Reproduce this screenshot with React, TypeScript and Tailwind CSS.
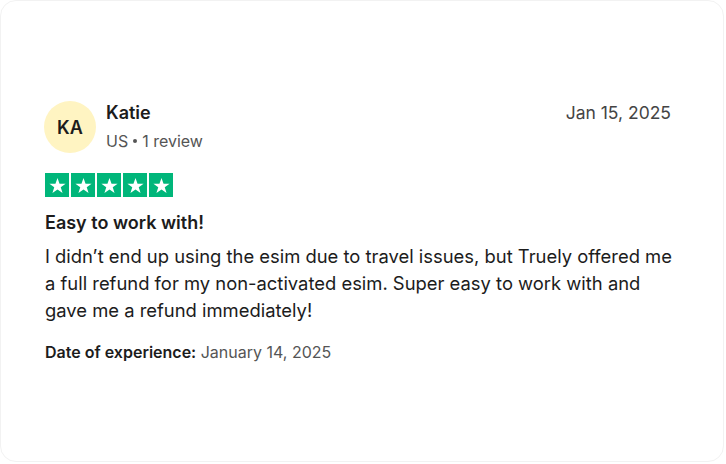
const Star = () => (
  <div className="flex h-[24px] w-[24px] items-center justify-center bg-[#00b67a]">
    <svg viewBox="0 0 24 24" className="h-[19px] w-[19px]" fill="#ffffff">
      <path d="M12 2.5l2.6 7.2h7.6l-6.1 4.5 2.3 7.3L12 17l-6.4 4.5 2.3-7.3-6.1-4.5h7.6z" />
    </svg>
  </div>
);

const App = () => {
  return (
    <div
      className="h-[464px] w-[726px] bg-white"
      style={{ fontFamily: "Inter, 'Liberation Sans', sans-serif" }}
    >
      <div className="flex h-[462px] w-[724px] flex-col rounded-2xl border border-[#f2f2f2] bg-white pl-[43px] pr-[48px] pt-[100px]">
        <div className="flex items-start">
          <div className="flex h-[52px] w-[52px] shrink-0 items-center justify-center rounded-full bg-[#fff4c2] text-[18px] font-semibold text-[#1c1c1c]">
            KA
          </div>
          <div className="ml-[10px] flex flex-1 flex-col">
            <div className="flex items-start justify-between">
              <span className="text-[18px] font-semibold leading-[24px] text-[#1c1c1c]">
                Katie
              </span>
              <span className="mr-[4px] text-[17.5px] leading-[24px] text-[#444444]">
                Jan 15, 2025
              </span>
            </div>
            <span className="mt-[5px] flex items-center text-[16px] leading-[22px] text-[#555555]">
              US
              <span className="mx-[5px] inline-block h-[4px] w-[4px] rounded-full bg-[#555555]" />
              1 review
            </span>
          </div>
        </div>

        <div className="mt-[20px] flex gap-[2px] pl-[1px]">
          <Star />
          <Star />
          <Star />
          <Star />
          <Star />
        </div>

        <h3 className="mt-[14px] pl-[1px] text-[18px] font-semibold leading-[24px] text-[#1c1c1c]">
          Easy to work with!
        </h3>
        <p className="mt-[8px] pl-[1px] text-[18.4px] leading-[27px] text-[#1c1c1c]">
          I didn’t end up using the esim due to travel issues, but Truely offered me a full refund
          for my non-activated esim. Super easy to work with and gave me a refund immediately!
        </p>
        <p className="mt-[17px] pl-[1px] text-[16px] leading-[22px] text-[#555555]">
          <span className="font-semibold text-[#1c1c1c]">Date of experience:</span> January 14, 2025
        </p>
      </div>
    </div>
  );
};

export default App;
